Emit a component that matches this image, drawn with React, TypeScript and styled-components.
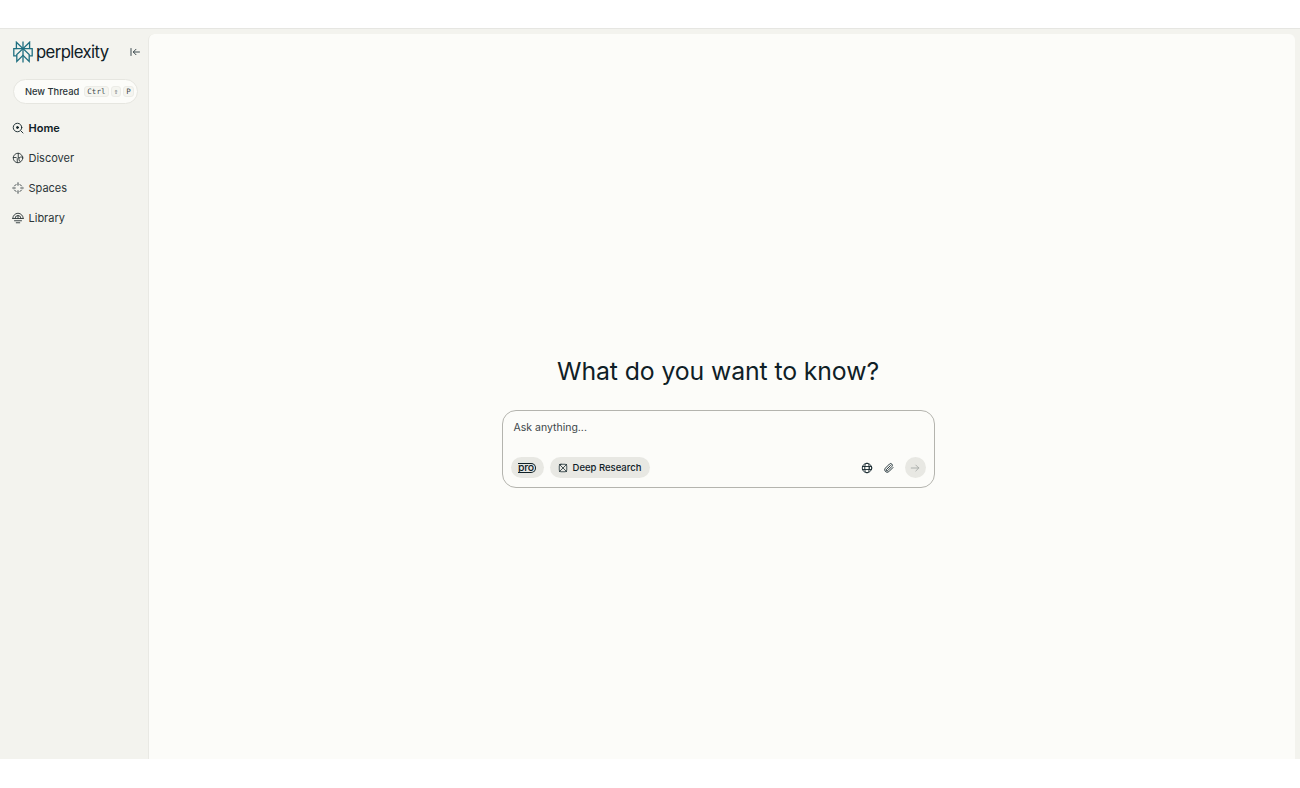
import { ReactNode } from "react";
import styled, { createGlobalStyle } from "styled-components";

const GlobalStyle = createGlobalStyle`
  html, body {
    margin: 0;
    padding: 0;
    background: #ffffff;
  }
  * {
    box-sizing: border-box;
  }
  body {
    font-family: Inter, "Liberation Sans", sans-serif;
    color: #13343b;
  }
`;

const Page = styled.div`
  width: 1300px;
  height: 788px;
  display: flex;
  flex-direction: column;
  overflow: hidden;
  background: #ffffff;
`;

const TopStrip = styled.div`
  height: 29px;
  flex: none;
  background: #ffffff;
  border-bottom: 1px solid #e6e6e2;
`;

const Shell = styled.div`
  height: 730px;
  flex: none;
  display: flex;
  padding: 5px 5px 0 0;
  background: #f3f3ee;
`;

const BottomStrip = styled.div`
  flex: 1;
  background: #ffffff;
`;

const Sidebar = styled.aside`
  width: 148px;
  flex: none;
  display: flex;
  flex-direction: column;
`;

const BrandRow = styled.div`
  height: 26px;
  margin-top: 5px;
  padding: 0 7px 0 13px;
  display: flex;
  align-items: center;
  justify-content: space-between;
`;

const Brand = styled.div`
  display: flex;
  align-items: center;
  gap: 3px;
`;

const Wordmark = styled.span`
  font-size: 16.7px;
  font-weight: 400;
  letter-spacing: -0.6px;
  color: #0f2026;
`;

const CollapseButton = styled.div`
  width: 12px;
  height: 12px;
  display: flex;
  color: #2b3a3e;
`;

const NewThread = styled.div`
  width: 125px;
  height: 25px;
  margin: 14px 0 0 13px;
  padding: 0 0 0 11px;
  display: flex;
  align-items: center;
  gap: 5px;
  background: #fcfcf9;
  border: 1px solid #e6e6e0;
  border-radius: 13px;
  font-size: 9.3px;
  line-height: 12px;
  font-weight: 500;
  color: #2b3538;
  white-space: nowrap;
`;

const Keys = styled.span`
  display: flex;
  gap: 2px;
`;

const Key = styled.kbd`
  height: 11px;
  padding: 0 2px;
  display: flex;
  align-items: center;
  background: #f5f5f0;
  border: 1px solid #ecece7;
  border-radius: 3px;
  font-family: "DejaVu Sans Mono", "Liberation Mono", monospace;
  font-size: 7.5px;
  letter-spacing: 0.1px;
  color: #3d4a4d;
`;

const Nav = styled.nav`
  margin-top: 9px;
  display: flex;
  flex-direction: column;
`;

const NavItem = styled.a<{ $active?: boolean }>`
  height: 29.9px;
  padding-left: 12px;
  display: flex;
  align-items: center;
  gap: 4.5px;
  font-size: 11px;
  font-weight: ${(p) => (p.$active ? 600 : 400)};
  color: ${(p) => (p.$active ? "#0f2026" : "#2b3538")};
`;

const Main = styled.main`
  flex: 1;
  padding: 323px 8px 0 0;
  display: flex;
  flex-direction: column;
  align-items: center;
  background: #fcfcf9;
  border-left: 1px solid #e9e9e4;
  border-radius: 6px 6px 0 0;
`;

const Heading = styled.h1`
  margin: 0;
  height: 28px;
  font-size: 24.8px;
  line-height: 28px;
  font-weight: 400;
  color: #0f2026;
  letter-spacing: -0.1px;
`;

const Composer = styled.div`
  width: 433px;
  height: 78px;
  margin-top: 25px;
  padding: 10px 8px 9px 8px;
  display: flex;
  flex-direction: column;
  justify-content: space-between;
  background: #fcfcf9;
  border: 1px solid #b4b4ae;
  border-radius: 14px;
`;

const Placeholder = styled.div`
  padding-left: 3px;
  font-size: 10.5px;
  line-height: 14px;
  color: #3c4649;
`;

const ComposerBar = styled.div`
  display: flex;
  align-items: center;
  justify-content: space-between;
`;

const ToolGroup = styled.div<{ $gap: number }>`
  display: flex;
  align-items: center;
  gap: ${(p) => p.$gap}px;
`;

const Pill = styled.div<{ $width: number }>`
  width: ${(p) => p.$width}px;
  height: 21px;
  display: flex;
  align-items: center;
  justify-content: center;
  gap: 5px;
  background: #e8e8e3;
  border-radius: 11px;
  font-size: 9.5px;
  font-weight: 500;
  color: #0f2026;
`;

const ProMark = styled.span`
  font-size: 10.5px;
  font-weight: 500;
  letter-spacing: -0.3px;
  line-height: 8px;
  height: 10px;
  color: #0f2026;
  border-top: 1px solid #0f2026;
  border-bottom: 1px solid #0f2026;
  border-right: 1px solid #0f2026;
  border-radius: 0 5px 5px 0;
  padding: 0 1px 0 0;
`;

const IconButton = styled.div`
  width: 12px;
  height: 12px;
  display: flex;
  color: #13252b;
`;

const SendButton = styled.div`
  width: 21px;
  height: 21px;
  display: flex;
  align-items: center;
  justify-content: center;
  background: #e8e8e3;
  border-radius: 50%;
  color: #9a9f9c;
`;

const Icon = ({ size = 12, children }: { size?: number; children: ReactNode }) => (
  <svg
    width={size}
    height={size}
    viewBox="0 0 24 24"
    fill="none"
    stroke="currentColor"
    strokeWidth={1.8}
    strokeLinecap="round"
    strokeLinejoin="round"
  >
    {children}
  </svg>
);

const Logo = () => (
  <svg width="20" height="22" viewBox="0 0 20 22" fill="none" stroke="#1f6f80" strokeWidth="1.3" strokeLinejoin="miter">
    <path d="M10 0.5V21.5" />
    <path d="M3.4 1.2L10 7.6L16.6 1.2V7.6H3.4V1.2Z" />
    <path d="M3.4 7.6H0.8V14.8H3.8M16.6 7.6H19.2V14.8H16.2" />
    <path d="M10 7.6L3.8 13.6V20.4L10 14.4L16.2 20.4V13.6L10 7.6Z" />
  </svg>
);

const navItems: { label: string; active?: boolean; icon: ReactNode }[] = [
  {
    label: "Home",
    active: true,
    icon: (
      <Icon>
        <circle cx="11" cy="11" r="8.5" />
        <circle cx="11" cy="11" r="2" fill="currentColor" />
        <path d="M18 18l4 4" />
      </Icon>
    ),
  },
  {
    label: "Discover",
    icon: (
      <Icon>
        <circle cx="12" cy="12" r="9.5" />
        <path d="M2.5 11h6l2 2v8M21.5 10h-5l-2 2h-2V2.5M14 12v4l2 3" />
      </Icon>
    ),
  },
  {
    label: "Spaces",
    icon: (
      <Icon>
        <path d="M12 1.5v5M12 17.5v5M1.5 12h5M17.5 12h5" />
        <path d="M8 5L5 8M16 5l3 3M8 19l-3-3M16 19l3-3" />
      </Icon>
    ),
  },
  {
    label: "Library",
    icon: (
      <Icon>
        <path d="M1.5 13a10.5 10.5 0 0 1 21 0" />
        <path d="M6 13a6 6 0 0 1 12 0" />
        <path d="M12 7v6" />
        <path d="M1.5 13h21M5 17.5h14M8.5 21.5h7" />
      </Icon>
    ),
  },
];

export default function App() {
  return (
    <Page>
      <GlobalStyle />
      <TopStrip />
      <Shell>
        <Sidebar>
          <BrandRow>
            <Brand>
              <Logo />
              <Wordmark>perplexity</Wordmark>
            </Brand>
            <CollapseButton>
              <Icon>
                <path d="M4 5v14M21 12H9M14 6.5L8.5 12l5.5 5.5" />
              </Icon>
            </CollapseButton>
          </BrandRow>
          <NewThread>
            New Thread
            <Keys>
              <Key>Ctrl</Key>
              <Key>⇧</Key>
              <Key>P</Key>
            </Keys>
          </NewThread>
          <Nav>
            {navItems.map((item) => (
              <NavItem key={item.label} $active={item.active}>
                {item.icon}
                {item.label}
              </NavItem>
            ))}
          </Nav>
        </Sidebar>
        <Main>
          <Heading>What do you want to know?</Heading>
          <Composer>
            <Placeholder>Ask anything...</Placeholder>
            <ComposerBar>
              <ToolGroup $gap={6}>
                <Pill $width={33}>
                  <ProMark>pro</ProMark>
                </Pill>
                <Pill $width={100}>
                  <Icon size={10}>
                    <rect x="3" y="3" width="18" height="18" rx="4" />
                    <path d="M3 3l18 18M21 3L3 21" />
                  </Icon>
                  Deep Research
                </Pill>
              </ToolGroup>
              <ToolGroup $gap={10}>
                <IconButton>
                  <Icon>
                    <circle cx="12" cy="12" r="9.5" />
                    <ellipse cx="12" cy="12" rx="4.5" ry="9.5" />
                    <path d="M3 9h18M3 15h18" />
                  </Icon>
                </IconButton>
                <IconButton>
                  <Icon>
                    <path d="M20 11l-8.5 8.5a5 5 0 0 1-7-7L13 4a3.4 3.4 0 0 1 4.8 4.8l-8.3 8.4a1.6 1.6 0 0 1-2.4-2.4L15 7" />
                  </Icon>
                </IconButton>
                <SendButton>
                  <Icon size={10}>
                    <path d="M3 12h18M14 5l7 7-7 7" />
                  </Icon>
                </SendButton>
              </ToolGroup>
            </ComposerBar>
          </Composer>
        </Main>
      </Shell>
      <BottomStrip />
    </Page>
  );
}
